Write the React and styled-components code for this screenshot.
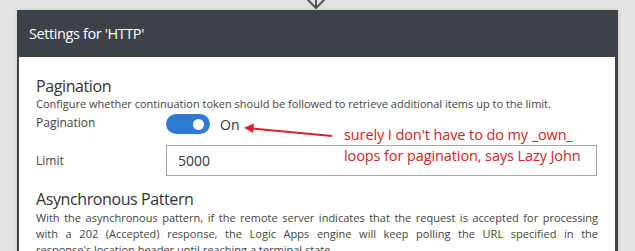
import React from 'react';
import styled, { createGlobalStyle } from 'styled-components';

const GlobalStyle = createGlobalStyle`
  html, body {
    margin: 0;
    padding: 0;
    background: #e3e3e3;
    overflow: hidden;
  }
  body {
    font-family: "Open Sans", "Noto Sans", sans-serif;
    color: #333;
  }
`;

const Page = styled.div`
  width: 635px;
  height: 251px;
  position: relative;
`;

const Connector = styled.div`
  height: 10px;
  display: flex;
  justify-content: center;
`;

const Card = styled.div`
  margin-left: 17px;
  width: 601px;
  box-shadow: 0 0 4px rgba(0, 0, 0, 0.12);
`;

const CardHeader = styled.div`
  height: 47px;
  background: #3d4148;
  color: #fff;
  display: flex;
  align-items: center;
  padding-left: 12px;
  font-size: 14.5px;
  letter-spacing: -0.4px;
`;

const CardBody = styled.div`
  background: #fff;
  border-left: 2px solid #3d4148;
  border-right: 3px solid #3d4148;
  padding: 19px 17px 20px 17px;
  height: 200px;
  box-sizing: border-box;
`;

const SectionTitle = styled.div`
  font-size: 16px;
  line-height: 20px;
  letter-spacing: -0.4px;
  color: #333;
  margin-top: ${p => p.$gap || 0}px;
`;

const Desc = styled.div`
  font-size: 11px;
  line-height: 16px;
  color: #444;
`;

const Para = styled.div`
  font-size: 11px;
  line-height: 16px;
  color: #444;
  margin-top: 1px;
`;

const ParaLine = styled.div`
  text-align: justify;
  text-align-last: ${p => (p.$last ? 'left' : 'justify')};
`;

const Row = styled.div`
  display: grid;
  grid-template-columns: 130px 1fr;
  align-items: center;
  margin-top: ${p => p.$gap || 0}px;
`;

const Label = styled.div`
  font-size: 12px;
  color: #444;
  align-self: ${p => (p.$top ? 'start' : 'center')};
`;

const ToggleWrap = styled.div`
  display: flex;
  align-items: center;
  gap: 10px;
`;

const Track = styled.div`
  width: 44px;
  height: 20px;
  border-radius: 10px;
  background: #2f7bd4;
  display: flex;
  align-items: center;
  justify-content: flex-end;
  padding-right: 6px;
  box-sizing: border-box;
`;

const Knob = styled.div`
  width: 11px;
  height: 11px;
  border-radius: 50%;
  background: #fff;
`;

const ToggleText = styled.span`
  font-size: 14px;
  color: #333;
`;

const Input = styled.div`
  width: 431px;
  height: 31px;
  box-sizing: border-box;
  border: 1px solid #a6a6a6;
  display: flex;
  align-items: center;
  padding-left: 11px;
  font-size: 14px;
  color: #333;
`;

const Note = styled.div`
  position: absolute;
  left: 344px;
  top: 124px;
  color: #d01f27;
  font-size: 14.5px;
  line-height: 21px;
  letter-spacing: -0.1px;
`;

const Overlay = styled.svg`
  position: absolute;
  left: 0;
  top: 0;
  pointer-events: none;
`;

const asyncLines = [
  'With the asynchronous pattern, if the remote server indicates that the request is accepted for processing',
  'with a 202 (Accepted) response, the Logic Apps engine will keep polling the URL specified in the',
  "response's location header until reaching a terminal state.",
];

export default function App() {
  return (
    <Page>
      <GlobalStyle />
      <Connector>
        <svg width="40" height="10" viewBox="0 0 40 10">
          <path d="M8 -2 L18 8 L28 -2" fill="none" stroke="#555" strokeWidth="2" />
          <path d="M18 -4 V8" stroke="#555" strokeWidth="2" />
        </svg>
      </Connector>
      <Card>
        <CardHeader>Settings for 'HTTP'</CardHeader>
        <CardBody>
          <SectionTitle>Pagination</SectionTitle>
          <Desc>Configure whether continuation token should be followed to retrieve additional items up to the limit.</Desc>
          <Row $gap={2}>
            <Label $top>Pagination</Label>
            <ToggleWrap>
              <Track><Knob /></Track>
              <ToggleText>On</ToggleText>
            </ToggleWrap>
          </Row>
          <Row $gap={11}>
            <Label>Limit</Label>
            <Input>5000</Input>
          </Row>
          <SectionTitle $gap={13}>Asynchronous Pattern</SectionTitle>
          <Para>
            {asyncLines.map((line, i) => (
              <ParaLine key={i} $last={i === asyncLines.length - 1}>{line}</ParaLine>
            ))}
          </Para>
        </CardBody>
      </Card>
      <Overlay width="635" height="251">
        <path d="M332 136 L252 128.5" stroke="#d9202a" strokeWidth="2" />
        <path d="M244 127.8 L254 123.5 L253 133 Z" fill="#d9202a" />
      </Overlay>
      <Note>
        surely I don't have to do my _own_
        <br />
        loops for pagination, says Lazy John
      </Note>
    </Page>
  );
}
